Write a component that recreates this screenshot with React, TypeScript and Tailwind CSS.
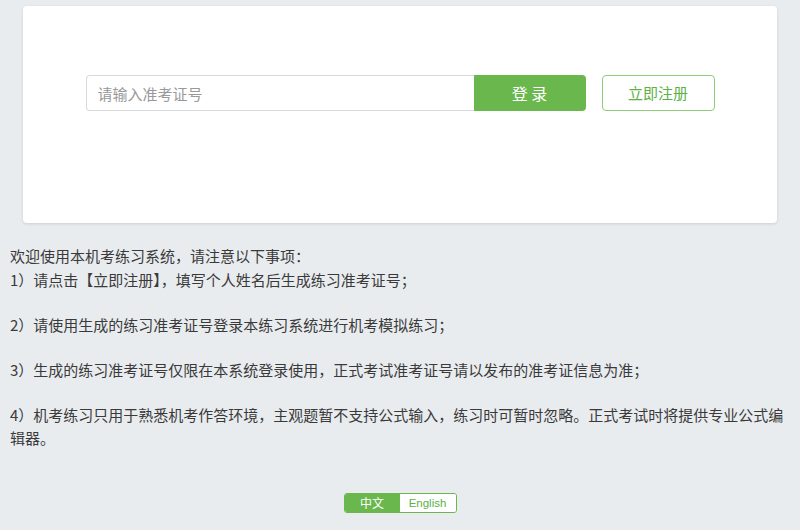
import React from "react";

export default function App() {
  return (
    <div className="min-h-[530px] w-full bg-[#e9ecef] font-['Noto_Sans_CJK_SC',sans-serif] text-[#333]">
      <div className="px-[23px] pt-[6px]">
        <div className="h-[217px] rounded-[4px] bg-white pt-[69px] shadow-[0_1px_3px_rgba(0,0,0,0.12)]">
          <div className="flex justify-center">
            <div className="flex h-[36px]">
              <input
                className="h-[36px] w-[388px] rounded-l-[4px] border border-r-0 border-[#d5dae0] px-[11px] text-[15px] text-[#333] outline-none placeholder:text-[#999]"
                placeholder="请输入准考证号"
              />
              <button className="h-[36px] w-[112px] rounded-r-[4px] bg-[#6ab84d] text-[16px] text-white">
                登 录
              </button>
            </div>
            <button className="ml-[16px] h-[36px] w-[113px] rounded-[4px] border border-[#8fcc78] bg-white text-[15px] text-[#5cb142]">
              立即注册
            </button>
          </div>
        </div>
      </div>

      <div className="mt-[22px] px-[10px] text-[15px] leading-[22.5px] text-[#3a3a3a]">
        <div className="mb-[1.5px]">欢迎使用本机考练习系统，请注意以下事项：</div>
        <div className="mb-[22.5px]">1）请点击【立即注册】，填写个人姓名后生成练习准考证号；</div>
        <div className="mb-[22.5px]">2）请使用生成的练习准考证号登录本练习系统进行机考模拟练习；</div>
        <div className="mb-[22.5px]">3）生成的练习准考证号仅限在本系统登录使用，正式考试准考证号请以发布的准考证信息为准；</div>
        <div>4）机考练习只用于熟悉机考作答环境，主观题暂不支持公式输入，练习时可暂时忽略。正式考试时将提供专业公式编辑器。</div>
      </div>

      <div className="mt-[44px] flex justify-center">
        <div className="flex h-[20px] overflow-hidden rounded-[3px] border border-[#6ab84d] text-[12px] leading-[18px]">
          <div className="flex w-[55px] items-center justify-center bg-[#6ab84d] text-white">中文</div>
          <div className="flex w-[56px] items-center justify-center bg-white font-['Liberation_Sans',sans-serif] text-[11.5px] text-[#5cb142]">
            English
          </div>
        </div>
      </div>
    </div>
  );
}
